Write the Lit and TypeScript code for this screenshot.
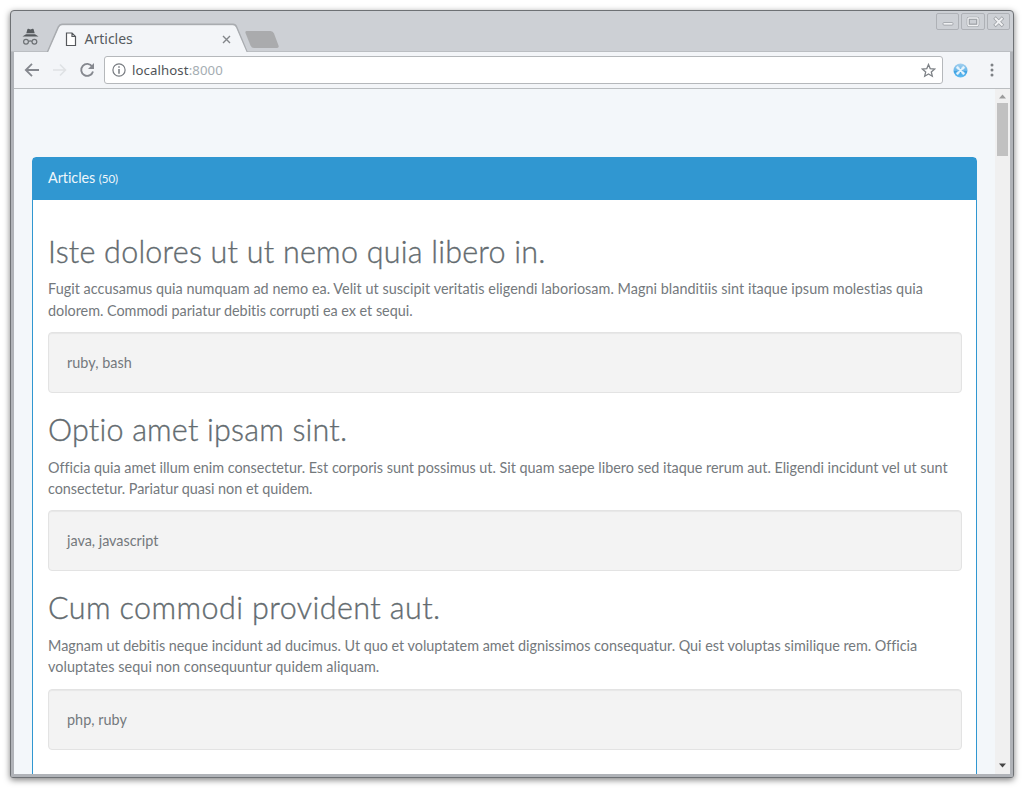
import { LitElement, html, css, svg } from "lit";
import { customElement } from "lit/decorators.js";
import { styleMap } from "lit/directives/style-map.js";

interface Line {
  text: string;
  spacing: number;
}
interface Article {
  title: Line;
  body: Line[];
  tags: Line;
}

const line = (text: string, spacing = 0): Line => ({ text, spacing });

const ARTICLES: Article[] = [
  {
    title: line("Iste dolores ut ut nemo quia libero in.", 0.23),
    body: [
      line("Fugit accusamus quia numquam ad nemo ea. Velit ut suscipit veritatis eligendi laboriosam. Magni blanditiis sint itaque ipsum molestias quia", 0.036),
      line("dolorem. Commodi pariatur debitis corrupti ea ex et sequi.", -0.025),
    ],
    tags: line("ruby, bash", 0.05),
  },
  {
    title: line("Optio amet ipsam sint.", 0.2),
    body: [
      line("Officia quia amet illum enim consectetur. Est corporis sunt possimus ut. Sit quam saepe libero sed itaque rerum aut. Eligendi incidunt vel ut sunt", -0.02),
      line("consectetur. Pariatur quasi non et quidem.", -0.03),
    ],
    tags: line("java, javascript", -0.02),
  },
  {
    title: line("Cum commodi provident aut.", 0.42),
    body: [
      line("Magnam ut debitis neque incidunt ad ducimus. Ut quo et voluptatem amet dignissimos consequatur. Qui est voluptas similique rem. Officia", -0.015),
      line("voluptates sequi non consequuntur quidem aliquam.", 0.06),
    ],
    tags: line("php, ruby", 0.03),
  },
];

@customElement("browser-titlebar")
class BrowserTitlebar extends LitElement {
  static styles = css`
    :host { display: grid; height: 41px; grid-template-columns: 1fr; color: #565b60; }
    .shape, .row { grid-area: 1 / 1; }
    .shape { display: block; width: 1002px; height: 41px; }
    .row { display: flex; padding-left: 11px; }
    .incognito { margin-top: 17px; width: 17px; height: 17px; }
    .page { margin: 21px 0 0 26px; width: 12px; height: 15px; }
    .label { margin: 18px 0 0 7.500px; width: 137px; font: 14px/20px "Noto Sans", sans-serif; }
    .close { margin-top: 24px; width: 9px; height: 9px; }
    .buttons { display: flex; gap: 2px; margin: 2px 3px 0 auto; }
    .button { box-sizing: border-box; width: 23.500px; height: 17px; border: 1px solid #aeb1b6; border-radius: 2px; }
    .button svg { display: block; }
  `;
  render() {
    return html`
      <svg class="shape" viewBox="11 11 1002 41">
        <path d="M11 52.3H47.5L58.5 27Q59.8 24.5 62 24.5H233Q235.500 24.500 236.500 27L247 52.300H1013" fill="none" stroke="#a9acb0" stroke-width="1.800" />
        <path d="M47.800 53L59 27.500Q60 25.200 62.500 25.200H232.500Q235 25.200 236 27.500L247 53Z" fill="#f3f5f8" />
        <path d="M246.500 31H270.500Q273 31 274 33.500L278.500 45.500Q279.200 48 276.500 48H254Q251.500 48 250.500 45.500L245.500 33Q245 31 246.500 31Z" fill="#aaabad" />
      </svg>
      <div class="row">
        <svg class="incognito" viewBox="0 0 17 17">
          <path d="M4.300 5.200L5.400 1.200Q5.600.5 6.400.8L8.500 1.400L10.600.8Q11.400.5 11.600 1.200L12.700 5.200Z" fill="#565a5e" />
          <path d="M.5 8.500L4 6.300H13L16.500 8.500Z" fill="#565a5e" />
          <g fill="none" stroke="#6d7175" stroke-width="1.200"><circle cx="4" cy="13.700" r="2.400" /><circle cx="12.400" cy="13.700" r="2.400" /><path d="M6.400 13.400Q8.200 12.300 10 13.400" /></g>
        </svg>
        <svg class="page" viewBox="0 0 12 15"><path d="M1.500 1H7L10.500 4.500V13.500H1.500ZM7 1V4.500H10.500" fill="#fff" stroke="#55585c" stroke-width="1.200" /></svg>
        <span class="label">Articles</span>
        <svg class="close" viewBox="0 0 9 9"><path d="M1 1L8 8M8 1L1 8" stroke="#83868a" stroke-width="1.400" /></svg>
        <div class="buttons">
          ${[
            svg`<rect x="6" y="8.500" width="10" height="2.600" rx="1" fill="#f0f1f3" stroke="#9b9ea3" stroke-width=".8" />`,
            svg`<rect x="6" y="4" width="10" height="7.500" rx="1" fill="none" stroke="#9b9ea3" stroke-width="2.600" /><rect x="6" y="4" width="10" height="7.500" rx="1" fill="none" stroke="#f0f1f3" stroke-width="1.400" /><rect x="7.500" y="5.500" width="7" height="4.500" fill="none" stroke="#9b9ea3" stroke-width=".8" />`,
            svg`<path d="M6.500 3.500L15 12M15 3.500L6.500 12" stroke="#9b9ea3" stroke-width="3.400" /><path d="M7 4L14.500 11.500M14.500 4L7 11.500" stroke="#f0f1f3" stroke-width="2" />`,
          ].map((g) => html`<div class="button"><svg width="21.500" height="15" viewBox="0 0 21.500 15">${g}</svg></div>`)}
        </div>
      </div>
    `;
  }
}

@customElement("browser-toolbar")
class BrowserToolbar extends LitElement {
  static styles = css`
    :host { display: flex; box-sizing: border-box; height: 37px; align-items: center; padding: 0 11px 0 10px; background: #f3f5f8; border-bottom: 1px solid #babdc0; }
    .nav { display: block; width: 16px; height: 16px; }
    .nav + .nav { margin-left: 11.500px; }
    .address { display: flex; align-items: center; box-sizing: border-box; width: 839px; height: 28px; margin-left: 9px; padding: 0 6px 0 7px; background: #fff; border: 1px solid #b5b8bb; border-radius: 3px; }
    .url { margin-left: 6px; color: #4f5357; font: 13.200px/20px "Noto Sans", sans-serif; letter-spacing: 0.1px; flex: 1; }
    .port { color: #a5adb2; }
    .extension { margin-left: 10px; }
    .menu { margin-left: 22px; }
    svg { display: block; flex: none; }
  `;
  render() {
    return html`
      <svg class="nav" viewBox="0 0 16 16"><path d="M15 8H2M8 1.800L1.800 8L8 14.200" fill="none" stroke="#85888f" stroke-width="1.800" /></svg>
      <svg class="nav" viewBox="0 0 16 16"><path d="M1 8H13.500M8 2.500L13.500 8L8 13.500" fill="none" stroke="#dfe1e4" stroke-width="1.600" /></svg>
      <svg class="nav" viewBox="0 0 16 16"><path d="M13.200 4.500A6 6 0 1 0 14 9.500" fill="none" stroke="#85888f" stroke-width="1.900" /><path d="M15 1V7H9Z" fill="#85888f" /></svg>
      <div class="address">
        <svg width="14" height="14" viewBox="0 0 14 14"><circle cx="7" cy="7" r="6.100" fill="none" stroke="#777b80" stroke-width="1.200" /><path d="M7 6V10.800M7 3.200V4.700" stroke="#777b80" stroke-width="1.500" /></svg>
        <span class="url">localhost<span class="port">:8000</span></span>
        <svg width="15" height="15" viewBox="0 0 15 15"><path d="M7.500 1.500L9.200 5.600L13.700 6L10.300 8.900L11.300 13.200L7.500 10.900L3.700 13.200L4.700 8.900L1.300 6L5.800 5.600Z" fill="none" stroke="#7e8287" stroke-width="1.300" /></svg>
      </div>
      <svg class="extension" width="15" height="15" viewBox="0 0 15 15">
        <defs><linearGradient id="g" x2="0" y2="1"><stop stop-color="#a4d0ee" /><stop offset=".5" stop-color="#6bb8ea" /><stop offset=".52" stop-color="#3d9fe0" /><stop offset="1" stop-color="#62bdf3" /></linearGradient></defs>
        <circle cx="7.500" cy="7.500" r="7" fill="url(#g)" />
        <path d="M4.300 4.300L10.700 10.700M10.700 4.300L4.300 10.700" stroke="#e8f5fd" stroke-width="1.800" stroke-linecap="round" />
        <g fill="none" stroke="#e8f5fd" stroke-width="1"><circle cx="4.900" cy="4.900" r="1.100" /><circle cx="10.100" cy="4.900" r="1.100" /><circle cx="4.900" cy="10.100" r="1.100" /><circle cx="10.100" cy="10.100" r="1.100" /></g>
      </svg>
      <svg class="menu" width="4" height="14" viewBox="0 0 4 14"><g fill="#7d8185"><circle cx="2" cy="2" r="1.500" /><circle cx="2" cy="7" r="1.500" /><circle cx="2" cy="12" r="1.500" /></g></svg>
    `;
  }
}

@customElement("article-panel")
class ArticlePanel extends LitElement {
  static styles = css`
    :host { display: block; box-sizing: border-box; width: 945px; height: 700px; border: 1px solid #3097d1; border-radius: 4px 4px 0 0; background: #fff; color: #74797d; font: 14.400px/21.400px Lato, sans-serif; }
    .heading { box-sizing: border-box; height: 42px; padding: 9px 15px; background: #3097d1; color: #eef6fb; letter-spacing: -0.06px; }
    .count { font-size: 11.500px; }
    .list { padding: 34.800px 14px 0 15px; }
    .title { height: 32px; margin: 0 0 11.500px; color: #636b6f; font-size: 30.500px; font-weight: 300; line-height: 32px; white-space: nowrap; -webkit-text-stroke: 0.35px #636b6f; }
    .body { margin: 0 0 10.800px; }
    .line { display: block; white-space: nowrap; }
    .well { box-sizing: border-box; height: 61px; margin-bottom: 20.200px; padding: 19px 18px; border: 1px solid #e3e3e3; border-radius: 4px; background: #f3f3f3; box-shadow: inset 0 1px 1px rgba(0, 0, 0, 0.05); }
  `;
  private text(l: Line) {
    return html`<span style=${styleMap({ letterSpacing: `${l.spacing}px` })}>${l.text}</span>`;
  }
  render() {
    return html`
      <div class="heading">Articles <span class="count">(50)</span></div>
      <div class="list">
        ${ARTICLES.map(
          (a) => html`
            <h2 class="title">${this.text(a.title)}</h2>
            <p class="body">${a.body.map((l) => html`<span class="line">${this.text(l)}</span>`)}</p>
            <div class="well">${this.text(a.tags)}</div>
          `
        )}
      </div>
    `;
  }
}

@customElement("app-root")
class AppRoot extends LitElement {
  static styles = css`
    :host { display: block; box-sizing: border-box; width: 1024px; height: 791px; padding: 10px 10px 13px; overflow: hidden; background: #fff; }
    .window { box-sizing: border-box; display: flex; flex-direction: column; width: 1004px; height: 768px; border: 1px solid #6e7175; border-radius: 4px 4px 3px 3px; overflow: hidden; background: #cdd0d5; box-shadow: 0 2px 6px rgba(0, 0, 0, 0.5); }
    .frame { display: flex; flex-direction: column; flex: 1; min-height: 0; border: solid #b0b3b8; border-width: 0 3px 3px; }
    .viewport { display: flex; flex: 1; min-height: 0; overflow: hidden; background: #f3f7fa; }
    .page { flex: 1; padding: 68px 0 0 18px; }
    .scrollbar { display: flex; flex-direction: column; align-items: center; width: 15px; background: #f0f0f0; }
    .thumb { width: 11px; height: 53px; background: #c1c1c1; }
    .up { margin: 5px 0 4px; }
    .down { margin: auto 0 6px; }
  `;
  render() {
    return html`
      <div class="window">
        <browser-titlebar></browser-titlebar>
        <div class="frame">
          <browser-toolbar></browser-toolbar>
          <div class="viewport">
            <div class="page"><article-panel></article-panel></div>
            <div class="scrollbar">
              <svg class="up" width="7" height="5" viewBox="0 0 7 5"><path d="M0 4.500L3.500.5L7 4.500Z" fill="#9b9b9b" /></svg>
              <div class="thumb"></div>
              <svg class="down" width="7" height="5" viewBox="0 0 7 5"><path d="M0 .5H7L3.500 4.500Z" fill="#454545" /></svg>
            </div>
          </div>
        </div>
      </div>
    `;
  }
}
